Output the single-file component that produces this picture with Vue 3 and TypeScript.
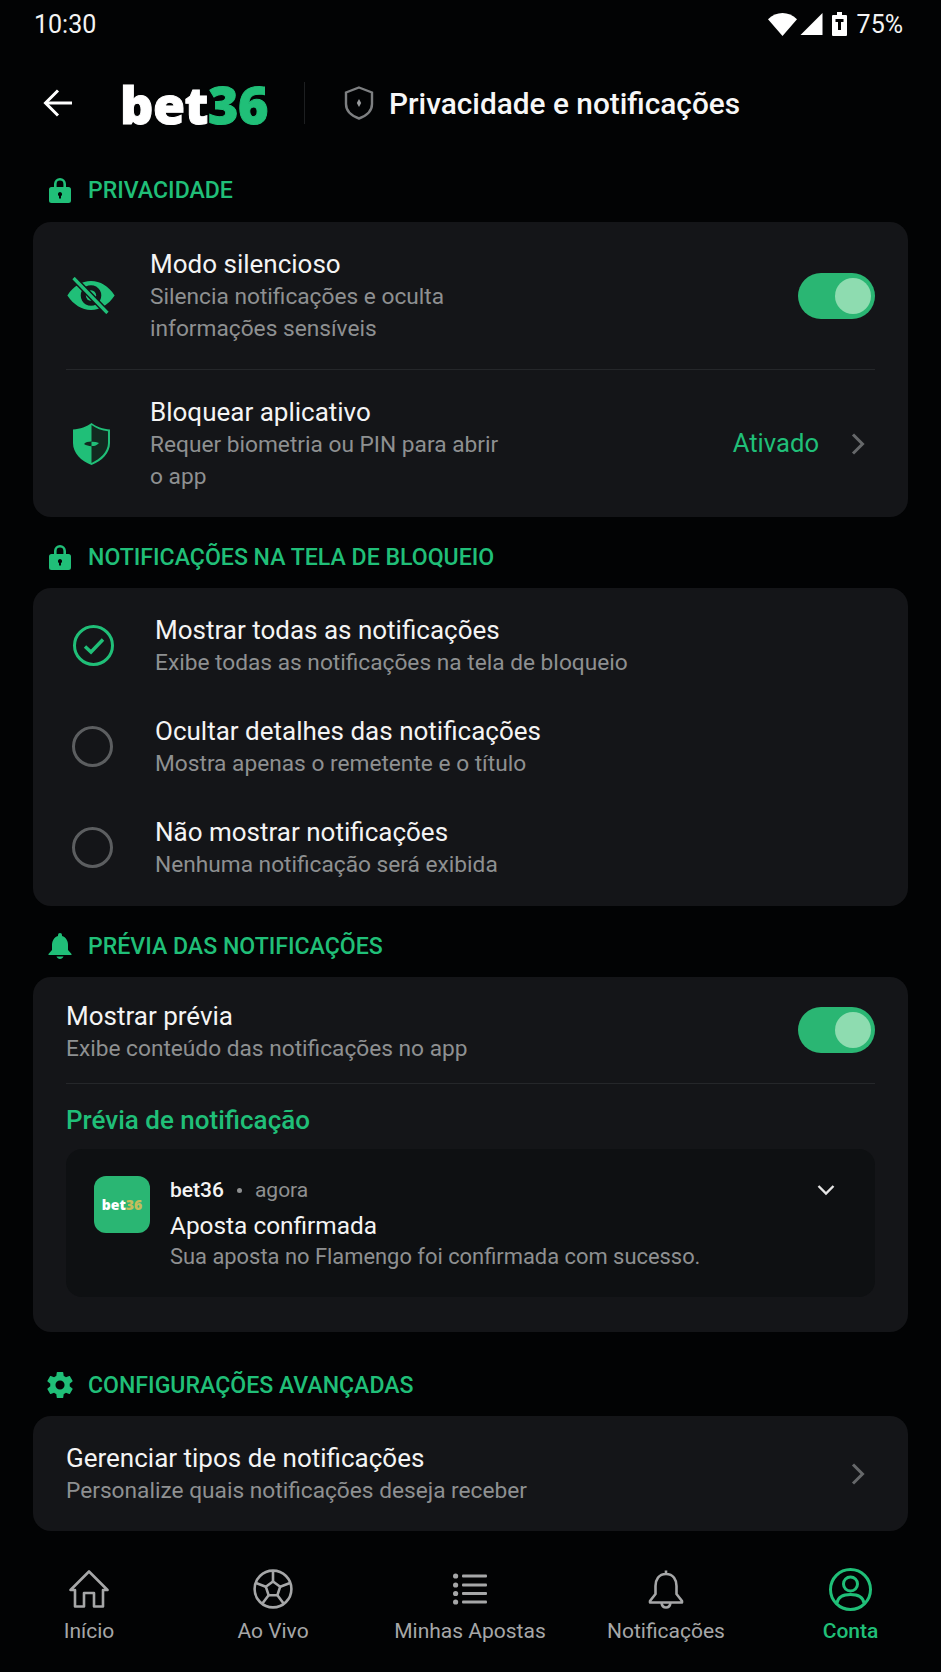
<script setup lang="ts">
interface RadioOption { title: string; sub: string; checked: boolean }
const options: RadioOption[] = [
  { title: 'Mostrar todas as notificações', sub: 'Exibe todas as notificações na tela de bloqueio', checked: true },
  { title: 'Ocultar detalhes das notificações', sub: 'Mostra apenas o remetente e o título', checked: false },
  { title: 'Não mostrar notificações', sub: 'Nenhuma notificação será exibida', checked: false },
]
</script>

<template>
  <div class="page">
    <div class="status">
      <span class="time">10:30</span>
      <div class="status-right">
        <svg class="s-wifi" viewBox="0 0 28 22"><path d="M0 6 C4 2 9 0 14 0 C19 0 24 2 28 6 L14 22 Z" fill="#fff"/></svg>
        <svg class="s-signal" viewBox="0 0 22 22"><path d="M22 0 V22 H0 Z" fill="#fff"/></svg>
        <svg class="s-batt" viewBox="0 0 15 24"><path d="M5 0 H10 V3 H14 Q15 3 15 4 V23 Q15 24 14 24 H1 Q0 24 0 23 V4 Q0 3 1 3 H5 Z" fill="#fff"/><path d="M3.5 7 H11.5 V10 H9 V18 H6 V10 H3.5 Z" fill="#000"/></svg>
        <span class="pct">75%</span>
      </div>
    </div>

    <header class="top">
      <svg class="back" viewBox="0 0 30 28" fill="none" stroke="#fff" stroke-width="3"><path d="M29 14 H3"/><path d="M15 1.5 L2.5 14 L15 26.5"/></svg>
      <div class="logo"><span>bet</span><span class="g">36</span></div>
      <div class="vline"></div>
      <svg class="head-shield" viewBox="0 0 30 34" fill="none"><path d="M15 1.5 L28 6.5 V18 C28 25 22 30 15 32.5 C8 30 2 25 2 18 V6.5 Z" stroke="#7d7f81" stroke-width="2.4"/><path d="M15 13 L17.2 17 L15 21 L12.8 17 Z" fill="#9a9c9e"/></svg>
      <h1 class="page-title">Privacidade e notificações</h1>
    </header>

    <main class="main">
      <div class="sec first">
        <span class="sec-ic">
          <svg class="lock" viewBox="0 0 22 26"><path fill-rule="evenodd" d="M5 10 V7 a6 6 0 0 1 12 0 V10 H19.5 Q22 10 22 12.5 V23.5 Q22 26 19.5 26 H2.5 Q0 26 0 23.5 V12.5 Q0 10 2.5 10 Z M7.6 10 H14.4 V7 a3.4 3.4 0 0 0 -6.8 0 Z M11 15 a2.2 2.2 0 0 0 -1 4.1 V21.5 H12 V19.1 A2.2 2.2 0 0 0 11 15 Z" fill="#20bf78"/></svg>
        </span>
        <span>PRIVACIDADE</span>
      </div>
      <section class="card">
        <div class="row-a">
          <span class="ic-a">
            <svg class="eye" viewBox="0 0 46 36"><path fill-rule="evenodd" d="M0 18 C6 9 14 4 23 4 C32 4 40 9 46 18 C40 27 32 32 23 32 C14 32 6 27 0 18 Z M23 8 a10 10 0 1 0 0.01 0 Z" fill="#20bf78"/><circle cx="23" cy="18" r="5" fill="#20bf78"/><path d="M6 1 L39 35" stroke="#141518" stroke-width="6"/><path d="M6 1 L39 35" stroke="#20bf78" stroke-width="3.2"/></svg>
          </span>
          <div class="txt raised">
            <div class="t">Modo silencioso</div>
            <div class="s narrow">Silencia notificações e oculta informações sensíveis</div>
          </div>
          <span class="toggle"><span class="knob"></span></span>
        </div>
        <div class="div"></div>
        <div class="row-a">
          <span class="ic-a">
            <svg class="shield" viewBox="0 0 37 42"><path d="M18.5 0 C23 3.5 30 6 37 6.5 V20 C37 30 29 38 18.5 42 C8 38 0 30 0 20 V6.5 C7 6 14 3.5 18.5 0 Z" fill="#20bf78"/><path d="M18.5 2 V40 C27 36 35 29 35 20 V8.3 C29 7.6 23 5.5 18.5 2 Z" fill="#122a20"/><path d="M11 21 C14 18 20 18 26 20 C22 24 16 24 11 21 Z" fill="#122a20"/><path d="M18.5 18.8 C21 18.6 23.5 19.2 26 20 C23.5 22.6 21 23.2 18.5 23 Z" fill="#20bf78"/></svg>
          </span>
          <div class="txt raised">
            <div class="t">Bloquear aplicativo</div>
            <div class="s narrow">Requer biometria ou PIN para abrir o app</div>
          </div>
          <span class="state">Ativado</span>
          <svg class="chev" viewBox="0 0 14 22" fill="none" stroke="#66686a" stroke-width="3"><path d="M2 1.5 L11.5 11 L2 20.5"/></svg>
        </div>
      </section>

      <div class="sec">
        <span class="sec-ic">
          <svg class="lock" viewBox="0 0 22 26"><path fill-rule="evenodd" d="M5 10 V7 a6 6 0 0 1 12 0 V10 H19.5 Q22 10 22 12.5 V23.5 Q22 26 19.5 26 H2.5 Q0 26 0 23.5 V12.5 Q0 10 2.5 10 Z M7.6 10 H14.4 V7 a3.4 3.4 0 0 0 -6.8 0 Z M11 15 a2.2 2.2 0 0 0 -1 4.1 V21.5 H12 V19.1 A2.2 2.2 0 0 0 11 15 Z" fill="#20bf78"/></svg>
        </span>
        <span>NOTIFICAÇÕES NA TELA DE BLOQUEIO</span>
      </div>
      <section class="card radios">
        <div v-for="o in options" :key="o.title" class="row-r">
          <span class="radio" :class="{ on: o.checked }">
            <svg v-if="o.checked" class="tick" viewBox="0 0 22 18" fill="none" stroke="#20bf78" stroke-width="3.4"><path d="M2 9.5 L8 15 L20 2.5"/></svg>
          </span>
          <div class="txt">
            <div class="t">{{ o.title }}</div>
            <div class="s">{{ o.sub }}</div>
          </div>
        </div>
      </section>

      <div class="sec">
        <span class="sec-ic">
          <svg class="bell-f" viewBox="0 0 24 26"><path d="M12 0 a2 2 0 0 1 2 2 V3 C18 4 20 8 20 12 V17 L23.5 21 V22 H0.5 V21 L4 17 V12 C4 8 6 4 10 3 V2 a2 2 0 0 1 2 -2 Z M8.5 23.5 H15.5 C15 25 13.5 26 12 26 C10.5 26 9 25 8.5 23.5 Z" fill="#20bf78"/></svg>
        </span>
        <span>PRÉVIA DAS NOTIFICAÇÕES</span>
      </div>
      <section class="card pad preview">
        <div class="row-p">
          <div class="txt raised-more">
            <div class="t">Mostrar prévia</div>
            <div class="s">Exibe conteúdo das notificações no app</div>
          </div>
          <span class="toggle"><span class="knob"></span></span>
        </div>
        <div class="div flush"></div>
        <h2 class="prev-h">Prévia de notificação</h2>
        <div class="notif">
          <div class="app"><span>bet</span><span class="y">36</span></div>
          <div class="n-txt">
            <div class="n-head"><span class="n-app">bet36</span><span class="dot"></span><span class="n-when">agora</span></div>
            <div class="n-t">Aposta confirmada</div>
            <div class="n-s">Sua aposta no Flamengo foi confirmada com sucesso.</div>
          </div>
          <svg class="chev-d" viewBox="0 0 18 12" fill="none" stroke="#e6e6e6" stroke-width="2.4"><path d="M1.5 2 L9 9.5 L16.5 2"/></svg>
        </div>
      </section>

      <div class="sec last">
        <span class="sec-ic">
          <svg class="gear" viewBox="2 2 20 20"><path d="M12 15.5A3.5 3.5 0 0 1 8.5 12 3.5 3.5 0 0 1 12 8.5a3.5 3.5 0 0 1 3.5 3.5 3.5 3.5 0 0 1-3.5 3.5m7.43-2.53c.04-.32.07-.64.07-.97s-.03-.66-.07-1l2.11-1.63c.19-.15.24-.42.12-.64l-2-3.46c-.12-.22-.39-.31-.61-.22l-2.49 1c-.52-.39-1.06-.73-1.69-.98l-.37-2.65A.506.506 0 0 0 14 2h-4c-.25 0-.46.18-.5.42l-.37 2.65c-.63.25-1.17.59-1.69.98l-2.49-1c-.22-.09-.49 0-.61.22l-2 3.46c-.13.22-.07.49.12.64L4.57 11c-.04.34-.07.67-.07 1s.03.65.07.97l-2.11 1.66c-.19.15-.25.42-.12.64l2 3.46c.12.22.39.3.61.22l2.49-1.01c.52.4 1.06.74 1.69.99l.37 2.65c.04.24.25.42.5.42h4c.25 0 .46-.18.5-.42l.37-2.65c.63-.26 1.17-.59 1.69-.99l2.49 1.01c.22.08.49 0 .61-.22l2-3.46c.12-.22.07-.49-.12-.64l-2.11-1.66Z" fill="#20bf78"/></svg>
        </span>
        <span>CONFIGURAÇÕES AVANÇADAS</span>
      </div>
      <section class="card pad">
        <div class="row-g">
          <div class="txt">
            <div class="t">Gerenciar tipos de notificações</div>
            <div class="s">Personalize quais notificações deseja receber</div>
          </div>
          <svg class="chev" viewBox="0 0 14 22" fill="none" stroke="#66686a" stroke-width="3"><path d="M2 1.5 L11.5 11 L2 20.5"/></svg>
        </div>
      </section>
    </main>

    <nav class="nav">
      <div class="tab">
        <span class="tab-ic"><svg width="40" height="38" viewBox="0 0 40 38" fill="none" stroke="#a6a7a8" stroke-width="2.6" stroke-linejoin="round"><path d="M20 1.5 L38.5 20 H34 V36.5 H25 V23 H15 V36.5 H6 V20 H1.5 Z"/></svg></span>
        <span class="lbl">Início</span>
      </div>
      <div class="tab">
        <span class="tab-ic"><svg width="40" height="40" viewBox="0 0 40 40" fill="none" stroke="#a6a7a8" stroke-width="2.6" stroke-linejoin="round"><circle cx="20" cy="20" r="18.4"/><path d="M20 12.5 L27.2 17.7 L24.4 26.2 H15.6 L12.8 17.7 Z"/><path d="M20 12.5 V2 M27.2 17.7 L37 14 M24.4 26.2 L31 35 M15.6 26.2 L9 35 M12.8 17.7 L3 14"/></svg></span>
        <span class="lbl">Ao Vivo</span>
      </div>
      <div class="tab">
        <span class="tab-ic"><svg width="34" height="32" viewBox="0 0 34 32" fill="#a6a7a8"><circle cx="2.6" cy="3" r="2.6"/><circle cx="2.6" cy="12" r="2.6"/><circle cx="2.6" cy="20.5" r="2.6"/><circle cx="2.6" cy="29" r="2.6"/><rect x="9" y="1.4" width="25" height="3.2" rx="1"/><rect x="9" y="10.4" width="25" height="3.2" rx="1"/><rect x="9" y="18.9" width="25" height="3.2" rx="1"/><rect x="9" y="27.4" width="25" height="3.2" rx="1"/></svg></span>
        <span class="lbl">Minhas Apostas</span>
      </div>
      <div class="tab">
        <span class="tab-ic"><svg width="36" height="40" viewBox="0 0 36 40" fill="none" stroke="#a6a7a8" stroke-width="2.6" stroke-linejoin="round"><path d="M18 1.5 V5 M18 5 C10.5 5 7.5 11 7.5 17 V25 L2 32 V33.5 H34 V32 L28.5 25 V17 C28.5 11 25.5 5 18 5 Z"/><path d="M13.5 34 C14 37 16 38.5 18 38.5 C20 38.5 22 37 22.5 34"/></svg></span>
        <span class="lbl">Notificações</span>
      </div>
      <div class="tab on">
        <span class="tab-ic"><svg width="43" height="43" viewBox="0 0 43 43" fill="none" stroke="#20bf78" stroke-width="3"><circle cx="21.5" cy="21.5" r="20"/><circle cx="21.5" cy="16" r="7"/><path d="M8 35 C9 29 14 26.5 21.5 26.5 C29 26.5 34 29 35 35"/></svg></span>
        <span class="lbl">Conta</span>
      </div>
    </nav>
  </div>
</template>

<style>
html, body { margin: 0; background: #020304; }
</style>

<style scoped>
.page {
  width: 941px;
  height: 1672px;
  overflow: hidden;
  display: flex;
  flex-direction: column;
  background: #020304;
  color: #f4f4f4;
  font-family: Roboto, "Liberation Sans", sans-serif;
}
.status {
  height: 48px;
  display: flex;
  align-items: center;
  justify-content: space-between;
  padding: 0 38px 0 34px;
  font-size: 25px;
}
.status-right { display: flex; align-items: center; }
.s-wifi { width: 29px; height: 23px; margin-right: 3px; }
.s-signal { width: 23px; height: 22px; margin-right: 9px; }
.s-batt { width: 15px; height: 24px; margin-right: 10px; }
.top {
  height: 110px;
  display: flex;
  align-items: center;
  padding-left: 43px;
}
.back { width: 30px; height: 28px; margin-right: 47px; }
.logo {
  width: 146px;
  margin-right: 38px;
  padding-top: 1px;
  font-family: "Open Sans", Roboto, sans-serif;
  font-weight: 800;
  font-size: 52px;
  line-height: 50px;
  letter-spacing: -0.5px;
  color: #fff;
  -webkit-text-stroke: 1px #fff;
  white-space: nowrap;
}
.logo .g { color: #20bf78; -webkit-text-stroke: 1px #20bf78; }
.vline { width: 1px; height: 42px; background: #1d1f21; margin-right: 39px; }
.head-shield { width: 30px; height: 34px; margin-right: 15px; }
.page-title { margin: 0; font-size: 29.8px; font-weight: 500; color: #f7f7f7; }
.main { flex: 1; padding: 0 33px; }
.sec {
  height: 30px;
  margin: 25px 0 16px;
  display: flex;
  align-items: center;
  font-size: 23.1px;
  font-weight: 500;
  color: #20bf78;
}
.sec.first { margin: 17px 0 17px; }
.sec.last { margin: 38px 0 16px; }
.sec-ic { width: 55px; display: flex; justify-content: center; padding-right: 2px; box-sizing: border-box; }
.lock { width: 22px; height: 26px; }
.bell-f { width: 24px; height: 26px; }
.gear { width: 26px; height: 26px; }
.card { background: #141518; border-radius: 18px; }
.card.pad { padding: 0 33px; }
.card.preview { padding-bottom: 35px; }
.card.radios { padding: 7px 0 8px; }
.row-a {
  height: 147px;
  display: flex;
  align-items: center;
  padding: 0 33px;
}
.ic-a { display: flex; width: 84px; padding-right: 34px; box-sizing: border-box; justify-content: center; flex: none; }
.eye { width: 48px; height: 37px; flex: none; }
.shield { width: 37px; height: 42px; flex: none; }
.txt { flex: 1; min-width: 0; }
.txt.raised { padding-top: 2px; }
.txt.raised-more { padding-top: 3px; }
.t { font-size: 26px; line-height: 33px; color: #f4f4f4; }
.s { font-size: 22.7px; line-height: 31px; color: #8e9091; }
.narrow { max-width: 362px; line-height: 32px; }
.toggle {
  width: 77px;
  height: 46px;
  border-radius: 24px;
  background: #2ab673;
  position: relative;
  flex: none;
}
.knob {
  position: absolute;
  right: 4px;
  top: 5px;
  width: 36px;
  height: 36px;
  border-radius: 50%;
  background: #8edcb0;
}
.div { height: 1px; background: #25272a; margin: 0 33px; }
.div.flush { margin: 0; }
.state { font-size: 25.6px; color: #20bf78; margin-right: 32px; margin-bottom: 2px; }
.chev { width: 14px; height: 22px; margin-right: 10px; flex: none; }
.row-r { height: 101px; display: flex; align-items: center; padding-left: 39px; }
.radio {
  width: 41px;
  height: 41px;
  box-sizing: border-box;
  border: 3px solid #5c5e60;
  border-radius: 50%;
  margin-right: 42px;
  flex: none;
  display: flex;
  align-items: center;
  justify-content: center;
}
.radio.on { border-color: #20bf78; margin-left: 1px; margin-right: 41px; }
.tick { width: 22px; height: 18px; }
.row-p { height: 106px; display: flex; align-items: center; }
.prev-h { margin: 19px 0 12px; font-size: 26px; line-height: 34px; font-weight: 500; color: #20bf78; }
.notif {
  height: 148px;
  box-sizing: border-box;
  padding: 27px 40px 0 28px;
  background: #0e1012;
  border-radius: 16px;
  display: flex;
  align-items: flex-start;
}
.app {
  width: 56px;
  height: 57px;
  border-radius: 12px;
  background: #2ab673;
  margin-right: 20px;
  flex: none;
  display: flex;
  align-items: center;
  justify-content: center;
  font-size: 14px;
  font-weight: 800;
  font-family: "Open Sans", Roboto, sans-serif;
  color: #fff;
}
.app .y { color: #c4bd5c; }
.n-txt { flex: 1; }
.n-head { height: 28px; display: flex; align-items: center; }
.n-app { font-size: 21px; font-weight: 500; color: #f4f4f4; }
.dot { width: 5px; height: 5px; border-radius: 50%; background: #8e9091; margin: 0 13px 0 13px; }
.n-when { font-size: 21px; color: #8e9091; }
.n-t { margin-top: 6px; font-size: 24.4px; line-height: 32px; color: #f4f4f4; }
.n-s { font-size: 21.9px; line-height: 30px; color: #8e9091; }
.chev-d { width: 18px; height: 12px; margin-top: 8px; flex: none; }
.row-g { height: 115px; display: flex; align-items: center; }
.nav {
  height: 132px;
  box-sizing: border-box;
  padding-top: 27px;
  display: grid;
  grid-template-columns: 178px 190px 204px 188px 181px;
  align-items: start;
}
.tab { display: flex; flex-direction: column; align-items: center; }
.tab-ic { height: 44px; display: flex; align-items: center; }
.lbl { margin-top: 8px; font-size: 21px; line-height: 24px; color: #a6a7a8; white-space: nowrap; }
.tab.on .lbl { color: #20bf78; font-weight: 500; }
</style>
